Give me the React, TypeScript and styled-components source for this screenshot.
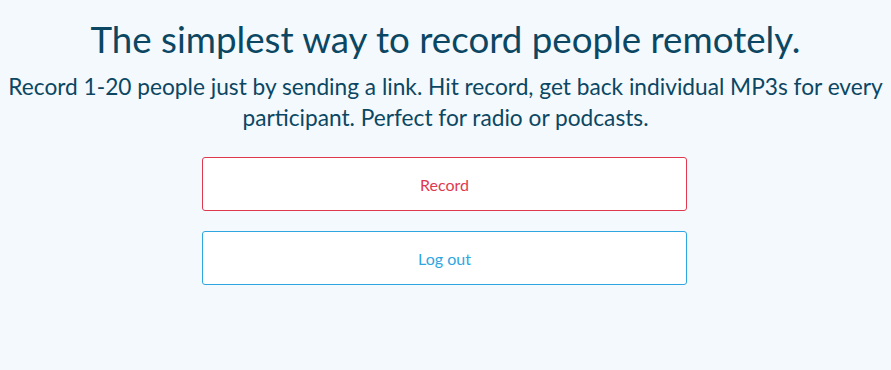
import React from 'react';
import styled, { createGlobalStyle } from 'styled-components';

const GlobalStyle = createGlobalStyle`
  html, body {
    margin: 0;
    padding: 0;
    background: #f4f9fd;
  }

  body {
    font-family: Lato, 'Open Sans', sans-serif;
    color: #0b4763;
  }
`;

const Page = styled.div`
  display: flex;
  flex-direction: column;
  align-items: center;
  min-height: 370px;
  padding-top: 13px;
  box-sizing: border-box;
`;

const Title = styled.h1`
  margin: 0;
  font-size: 36.7px;
  font-weight: 400;
  line-height: 52px;
  text-align: center;
`;

const Lead = styled.p`
  margin: 6px 0 24px;
  font-size: 22.7px;
  line-height: 31px;
  text-align: center;
  white-space: nowrap;
`;

const Actions = styled.div`
  display: flex;
  flex-direction: column;
  gap: 20px;
  width: 485px;
  margin-right: 2px;
`;

const Button = styled.button<{ $tone: 'red' | 'blue' }>`
  height: 54px;
  border: 1px solid ${(p) => (p.$tone === 'red' ? '#e0394f' : '#2fa6df')};
  border-radius: 3px;
  background: #fff;
  color: ${(p) => (p.$tone === 'red' ? '#e0394f' : '#2fa6df')};
  font-family: Lato, sans-serif;
  font-size: 16px;
  cursor: pointer;
`;

export default function App() {
  return (
    <>
      <GlobalStyle />
      <Page>
        <Title>The simplest way to record people remotely.</Title>
        <Lead>
          Record 1-20 people just by sending a link. Hit record, get back individual MP3s for every
          <br />
          participant. Perfect for radio or podcasts.
        </Lead>
        <Actions>
          <Button $tone='red'>Record</Button>
          <Button $tone='blue'>Log out</Button>
        </Actions>
      </Page>
    </>
  );
}
